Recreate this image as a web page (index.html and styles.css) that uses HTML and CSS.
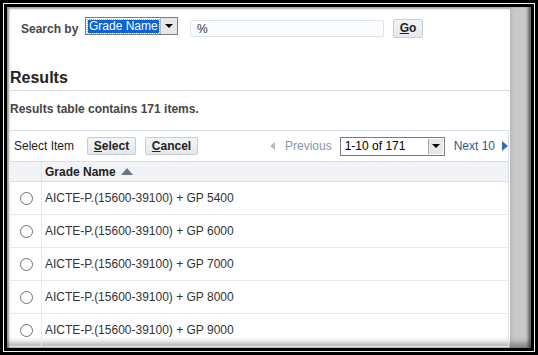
FILE: index.html
```html
<!DOCTYPE html>
<html>
<head>
<meta charset="utf-8">
<link rel="stylesheet" href="styles.css">
</head>
<body>
<div class="frame">
  <div class="frame-in">
    <div class="page">
      <div class="main">
        <div class="search">
          <span class="search-label">Search by</span>
          <div class="combo">
            <span class="combo-val"><span class="hl">Grade Name</span></span>
            <span class="combo-btn"><span class="tri-down"></span></span>
          </div>
          <div class="field">%</div>
          <button class="btn go"><u>G</u>o</button>
        </div>

        <h2 class="heading">Results</h2>
        <p class="count">Results table contains 171 items.</p>

        <div class="table">
          <div class="bar">
            <span class="bar-label">Select Item</span>
            <button class="btn sel"><u>S</u>elect</button>
            <button class="btn cancel"><u>C</u>ancel</button>
            <div class="pager">
              <span class="tri-left"></span>
              <span class="prev">Previous</span>
              <div class="combo range">
                <span class="combo-val">1-10 of 171</span>
                <span class="combo-btn"><span class="tri-down"></span></span>
              </div>
              <span class="next">Next 10</span>
              <span class="tri-right"></span>
            </div>
          </div>
          <div class="row head">
            <div class="c-radio"></div>
            <div class="c-name">Grade Name <span class="tri-up"></span></div>
          </div>
          <div class="row"><div class="c-radio"><span class="radio"></span></div><div class="c-name">AICTE-P.(15600-39100) + GP 5400</div></div>
          <div class="row"><div class="c-radio"><span class="radio"></span></div><div class="c-name">AICTE-P.(15600-39100) + GP 6000</div></div>
          <div class="row"><div class="c-radio"><span class="radio"></span></div><div class="c-name">AICTE-P.(15600-39100) + GP 7000</div></div>
          <div class="row"><div class="c-radio"><span class="radio"></span></div><div class="c-name">AICTE-P.(15600-39100) + GP 8000</div></div>
          <div class="row"><div class="c-radio"><span class="radio"></span></div><div class="c-name">AICTE-P.(15600-39100) + GP 9000</div></div>
        </div>
      </div>
      <div class="scroll"></div>
    </div>
  </div>
</div>
</body>
</html>
```

FILE: styles.css
```css
* { box-sizing: border-box; }
html, body { margin: 0; padding: 0; background: #000; }
body { font-family: "Liberation Sans", Arial, sans-serif; font-size: 12px; color: #333; }

.frame { width: 538px; height: 355px; padding: 3px; background: #000; }
.frame-in { height: 100%; border: 1px solid #f4f4f4; padding: 3px; background: #000; }
.page {
  height: 341px; display: flex; background: #fff; overflow: hidden;
  box-shadow: inset 2px 2px 2px rgba(0,0,0,0.35), inset 0 -7px 6px -2px rgba(0,0,0,0.35);
}
.main { flex: 1; padding-left: 2px; overflow: hidden; }
.scroll {
  width: 21px; flex-shrink: 0; background: #c9c9c9;
  box-shadow: inset -4px 0 3px -1px rgba(0,0,0,0.45), inset 0 -7px 6px -2px rgba(0,0,0,0.35);
}

/* search row */
.search { display: flex; align-items: flex-start; margin: 10px 0 0 12px; height: 21px; }
.search-label { font-weight: bold; color: #474747; line-height: 14px; margin-top: 5px; width: 64px; }
.combo { display: flex; height: 18px; border: 1px solid #7b7b7b; background: #fff; flex-shrink: 0; }
.search .combo { width: 93px; }
.combo-val { flex: 1; display: flex; align-items: center; padding: 1px 1px 1px 2px; font-size: 12px; color: #000; white-space: nowrap; overflow: hidden; }
.hl {
  background: #0a64d4; color: #fff; display: block; width: 100%; line-height: 13px; font-size: 12px;
  outline: 1px dotted #f0a030; padding: 0 1px; white-space: nowrap;
}
.combo-btn {
  width: 17px; background: #e7e7e7; border-left: 1px solid #b8b8b8;
  display: flex; align-items: center; justify-content: center;
}
.tri-down { width: 0; height: 0; border-left: 4px solid transparent; border-right: 4px solid transparent; border-top: 4px solid #000; }
.field {
  width: 194px; height: 17px; margin: 3px 0 0 12px; border: 1px solid #dfe4ea; border-radius: 2px;
  background: #fbfcfe; padding: 1px 0 0 6px; font-size: 12px; color: #333; line-height: 14px;
}
.btn {
  font-family: "Liberation Sans", Arial, sans-serif; font-weight: bold; font-size: 12px; color: #222;
  height: 18px; padding: 0; background: linear-gradient(#f2f4f7, #e5e9ee);
  border: 1px solid #c6cdd5; border-radius: 2px; line-height: 15px; flex-shrink: 0;
}
.go { width: 30px; height: 19px; margin: 2px 0 0 9px; }

/* results */
.heading {
  margin: 30px 0 0 1px; padding-bottom: 3px; font-size: 16px; line-height: 19px; color: #222;
  border-bottom: 1px solid #d8dfe5; font-weight: bold;
}
.count { margin: 11px 0 0 1px; font-weight: bold; color: #454545; line-height: 14px; font-size: 12px; }

.table { margin: 14px 1px 0 0; border-top: 1px solid #d9dfe6; border-right: 1px solid #d9dfe6; }
.bar { display: flex; align-items: center; height: 30px; padding-left: 5px; white-space: nowrap; }
.bar-label { color: #222; width: 73px; flex-shrink: 0; }
.sel { width: 49px; }
.cancel { width: 53px; margin-left: 9px; }
.pager { display: flex; align-items: center; margin-left: 72px; flex-shrink: 0; white-space: nowrap; }
.tri-left { width: 0; height: 0; border-top: 4px solid transparent; border-bottom: 4px solid transparent; border-right: 5px solid #b5bcc5; margin-right: 10px; }
.prev { color: #8797aa; font-size: 12px; margin-right: 8px; }
.range { width: 105px; height: 19px; }
.range .combo-val { padding-left: 4px; align-items: flex-start; line-height: 14px; }
.range .combo-btn { width: 15px; border-left: 1px solid #a8a8a8; margin: 1px; }
.next { color: #2d5a93; margin-left: 9px; font-size: 12px; }
.tri-right { width: 0; height: 0; border-top: 5px solid transparent; border-bottom: 5px solid transparent; border-left: 6px solid #2e6cb8; margin-left: 7px; }

.row { display: flex; height: 33px; border-bottom: 1px solid #e6e8eb; }
.row.head { height: 21px; background: #f1f3f6; border-top: 1px solid #d9dfe6; border-bottom: 1px solid #d9dfe6; }
.c-radio { width: 33px; border-right: 1px solid #e6e8eb; display: flex; align-items: center; justify-content: center; padding-left: 2px; }
.head .c-radio { border-right-color: #dde2e8; }
.c-name { flex: 1; display: flex; align-items: center; padding-left: 3px; color: #333; font-size: 12px; }
.head .c-name { font-weight: bold; color: #222; }
.tri-up { display: inline-block; width: 0; height: 0; border-left: 6px solid transparent; border-right: 6px solid transparent; border-bottom: 7px solid #6b7585; margin-left: 5px; }
.radio { width: 13px; height: 13px; border: 1px solid #6f6f6f; border-radius: 50%; background: #fff; }
```
